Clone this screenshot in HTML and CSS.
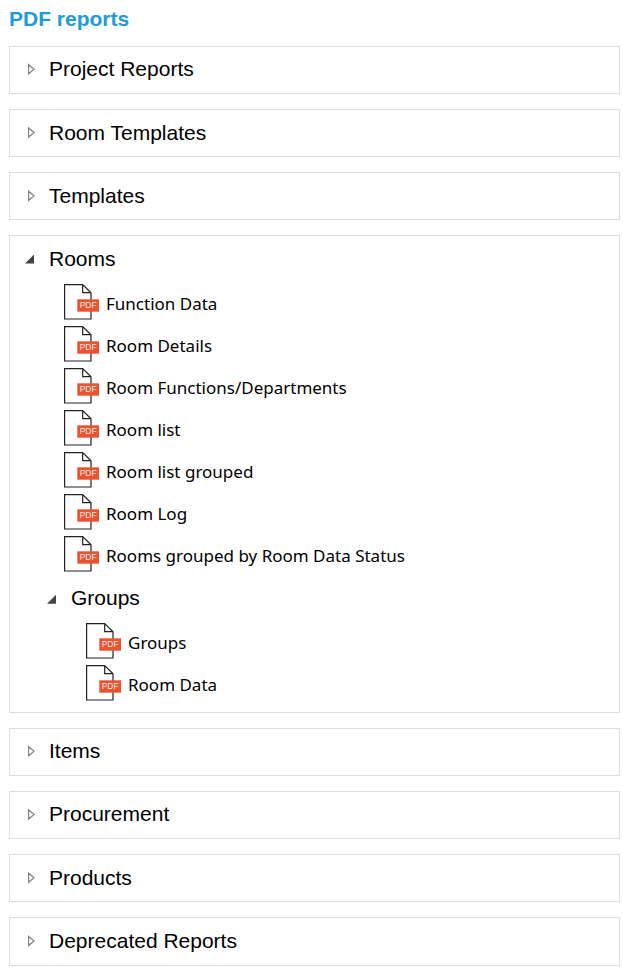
FILE: index.html
```html
<!DOCTYPE html>
<html lang="en">
<head>
<meta charset="utf-8">
<title>PDF reports</title>
<link rel="stylesheet" href="styles.css">
</head>
<body>
<svg class="defs" width="0" height="0" aria-hidden="true">
  <symbol id="doc" viewBox="0 0 36 38">
    <path d="M0.6 0.6H18.7L27 8.7V35H0.6Z M18.7 0.6V8.7H27" fill="#fff" stroke="#222" stroke-width="1.2"/>
    <rect x="13.3" y="15.3" width="21.7" height="12.4" fill="#e9532f"/>
  </symbol>
</svg>
<h1 class="title">PDF reports</h1>
<section class="panel"><div class="head"><span class="arrow closed"></span>Project Reports</div></section>
<section class="panel"><div class="head"><span class="arrow closed"></span>Room Templates</div></section>
<section class="panel"><div class="head"><span class="arrow closed"></span>Templates</div></section>
<section class="panel open">
  <div class="head"><span class="arrow opened"></span>Rooms</div>
  <ul class="files">
    <li><span class="icon"><svg width="36" height="38"><use href="#doc"/></svg><b>PDF</b></span>Function Data</li>
    <li><span class="icon"><svg width="36" height="38"><use href="#doc"/></svg><b>PDF</b></span>Room Details</li>
    <li><span class="icon"><svg width="36" height="38"><use href="#doc"/></svg><b>PDF</b></span>Room Functions/Departments</li>
    <li><span class="icon"><svg width="36" height="38"><use href="#doc"/></svg><b>PDF</b></span>Room list</li>
    <li><span class="icon"><svg width="36" height="38"><use href="#doc"/></svg><b>PDF</b></span>Room list grouped</li>
    <li><span class="icon"><svg width="36" height="38"><use href="#doc"/></svg><b>PDF</b></span>Room Log</li>
    <li><span class="icon"><svg width="36" height="38"><use href="#doc"/></svg><b>PDF</b></span>Rooms grouped by Room Data Status</li>
  </ul>
  <div class="sub">
    <div class="head subhead"><span class="arrow opened"></span>Groups</div>
    <ul class="files">
      <li><span class="icon"><svg width="36" height="38"><use href="#doc"/></svg><b>PDF</b></span>Groups</li>
      <li><span class="icon"><svg width="36" height="38"><use href="#doc"/></svg><b>PDF</b></span>Room Data</li>
    </ul>
  </div>
</section>
<section class="panel"><div class="head"><span class="arrow closed"></span>Items</div></section>
<section class="panel"><div class="head"><span class="arrow closed"></span>Procurement</div></section>
<section class="panel"><div class="head"><span class="arrow closed"></span>Products</div></section>
<section class="panel"><div class="head"><span class="arrow closed"></span>Deprecated Reports</div></section>
</body>
</html>
```
FILE: styles.css
```css
html, body { margin: 0; padding: 0; background: #fff; }
body {
  padding: 6px 3px 0 9px;
  font-family: "Liberation Sans", Arial, sans-serif;
  color: #000;
  overflow: hidden;
}
.defs { position: absolute; }
.title {
  margin: 0 0 13.7px;
  font-size: 21px;
  line-height: 26px;
  font-weight: 700;
  color: #1e9cd8;
}
.panel {
  border: 1px solid #ddd;
  margin-bottom: 15px;
  height: 48.25px;
  box-sizing: border-box;
}
.panel.open { height: 477.15px; }
.head {
  display: flex;
  align-items: center;
  height: 45.2px;
  padding-left: 18px;
  font-size: 21px;
}
.arrow {
  width: 7px;
  height: 12px;
  margin-right: 14px;
  flex: none;
  box-sizing: border-box;
  position: relative;
}
.closed {
  clip-path: polygon(0 0, 100% 50%, 0 100%);
  background: #858585;
}
.closed::after {
  content: "";
  position: absolute;
  inset: 0;
  background: #fff;
  clip-path: polygon(1.2px 3px, 5.2px 50%, 1.2px 9px);
}
.opened {
  width: 9px;
  height: 9px;
  margin: 0 15px 0 -3px;
  background: #444;
  clip-path: polygon(100% 0, 100% 100%, 0 100%);
}
.files { list-style: none; margin: 0; padding: 0.5px 0 0 54px; }
.files li {
  display: flex;
  align-items: center;
  height: 42px;
  font-family: "Noto Sans", "Open Sans", sans-serif;
  font-size: 17px;
}
.icon { position: relative; width: 42px; height: 38px; flex: none; }
.icon svg { display: block; }
.icon b {
  position: absolute;
  left: 13.3px;
  top: 15.3px;
  width: 21.7px;
  text-align: center;
  font: 400 8.5px/12.4px "Liberation Sans", Arial, sans-serif;
  color: #fdeee9;
}
.sub { padding-left: 22px; }
.subhead { height: 42px; padding-left: 18px; margin-top: 1px; }
.subhead .opened { top: 1px; }
.sub .files { padding-top: 2px; }
```
